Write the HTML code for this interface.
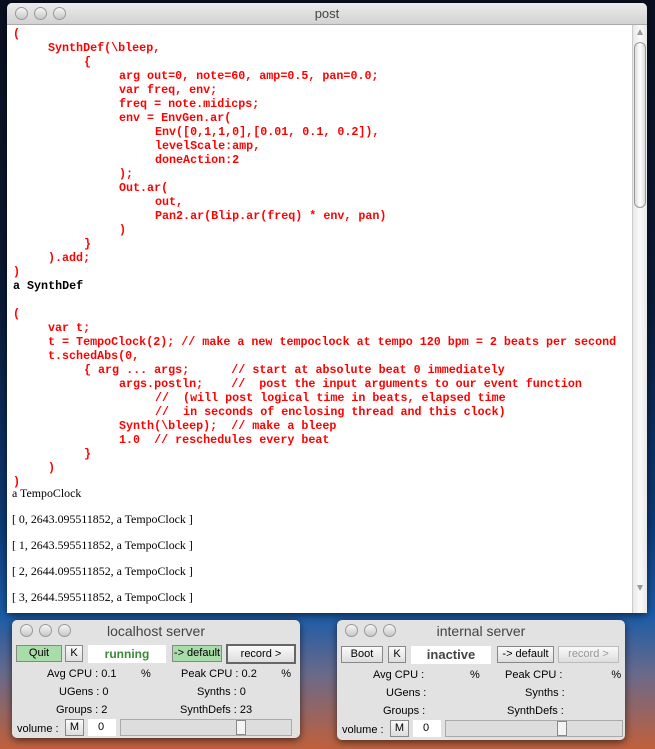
<!DOCTYPE html>
<html><head><meta charset="utf-8"><style>
*{margin:0;padding:0;box-sizing:border-box}
body{width:655px;height:749px;overflow:hidden;position:relative;
background:linear-gradient(#0a1020 0%,#0b1a35 40%,#0d3a78 70%,#1a5ca8 82%,#6a6a8a 90%,#c0603a 100%);
font-family:"Liberation Sans",sans-serif}
.win{position:absolute;background:#e4e4e4;border-radius:5px;box-shadow:0 2px 8px rgba(0,0,0,.6)}
.tb{position:absolute;left:0;right:0;top:0;height:22px;border-radius:5px 5px 0 0;background:linear-gradient(#ececec,#d2d2d2);border-bottom:1px solid #aaa;text-align:center;font-size:13px;line-height:22px;color:#444}
.dot{position:absolute;top:4px;width:13px;height:13px;border-radius:50%;background:linear-gradient(#f6f6f6,#c8c8c8);border:1px solid #999}
.ed{position:absolute;left:0;top:22px;right:15px;bottom:0;background:#fff}
.m{position:absolute;margin-top:2px;font-family:"Liberation Mono",monospace;font-weight:bold;font-size:11.7px;color:#f00;white-space:pre;line-height:14px}
.k{color:#000}
.s{position:absolute;font-family:"Liberation Serif",serif;font-size:11.9px;color:#000;white-space:pre;line-height:14px}
.sb{position:absolute;right:0;top:22px;width:15px;bottom:0;background:linear-gradient(90deg,#e8e8e8,#fafafa,#e8e8e8);border-left:1px solid #ccc}
.th{position:absolute;left:1px;width:12px;top:17px;height:166px;border:1px solid #999;border-radius:6px;background:linear-gradient(90deg,#ddd,#fff,#ddd)}
.b{position:absolute;height:17px;font-size:11px;line-height:15px;text-align:center;border:1px solid #888;background:linear-gradient(#fafafa,#ddd);color:#000}
.g{background:#a8dca8}
.l{position:absolute;font-size:11px;color:#000;white-space:pre}
.box{position:absolute;background:#fff}
</style></head><body>

<div class="win" style="left:7px;top:3px;width:640px;height:610px">
 <div class="tb">post</div>
 <div class="dot" style="left:8px"></div><div class="dot" style="left:27px"></div><div class="dot" style="left:46px"></div>
 <div class="ed"></div>
 <div class="sb"><div style="position:absolute;left:4px;top:4px;width:0;height:0;border-left:3px solid transparent;border-right:3px solid transparent;border-bottom:6px solid #999"></div><div class="th"></div>
 <div style="position:absolute;left:4px;bottom:22px;width:0;height:0;border-left:3px solid transparent;border-right:3px solid transparent;border-top:6px solid #999"></div></div>
</div>

<div class="m" style="left:13px;top:25px">(</div>
<div class="m" style="left:48px;top:39px">SynthDef(\bleep,</div>
<div class="m" style="left:84px;top:53px">{</div>
<div class="m" style="left:119px;top:67px">arg out=0, note=60, amp=0.5, pan=0.0;</div>
<div class="m" style="left:119px;top:81px">var freq, env;</div>
<div class="m" style="left:119px;top:95px">freq = note.midicps;</div>
<div class="m" style="left:119px;top:109px">env = EnvGen.ar(</div>
<div class="m" style="left:155px;top:123px">Env([0,1,1,0],[0.01, 0.1, 0.2]),</div>
<div class="m" style="left:155px;top:137px">levelScale:amp,</div>
<div class="m" style="left:155px;top:151px">doneAction:2</div>
<div class="m" style="left:119px;top:165px">);</div>
<div class="m" style="left:119px;top:179px">Out.ar(</div>
<div class="m" style="left:155px;top:193px">out,</div>
<div class="m" style="left:155px;top:207px">Pan2.ar(Blip.ar(freq) * env, pan)</div>
<div class="m" style="left:119px;top:221px">)</div>
<div class="m" style="left:84px;top:235px">}</div>
<div class="m" style="left:48px;top:249px">).add;</div>
<div class="m" style="left:13px;top:263px">)</div>
<div class="m k" style="left:13px;top:277px">a SynthDef</div>
<div class="m" style="left:13px;top:305px">(</div>
<div class="m" style="left:48px;top:319px">var t;</div>
<div class="m" style="left:48px;top:333px">t = TempoClock(2); // make a new tempoclock at tempo 120 bpm = 2 beats per second</div>
<div class="m" style="left:48px;top:347px">t.schedAbs(0,</div>
<div class="m" style="left:84px;top:361px">{ arg ... args;      // start at absolute beat 0 immediately</div>
<div class="m" style="left:119px;top:375px">args.postln;    //  post the input arguments to our event function</div>
<div class="m" style="left:155px;top:389px">//  (will post logical time in beats, elapsed time</div>
<div class="m" style="left:155px;top:403px">//  in seconds of enclosing thread and this clock)</div>
<div class="m" style="left:119px;top:417px">Synth(\bleep);  // make a bleep</div>
<div class="m" style="left:119px;top:431px">1.0  // reschedules every beat</div>
<div class="m" style="left:84px;top:445px">}</div>
<div class="m" style="left:48px;top:459px">)</div>
<div class="m" style="left:13px;top:473px">)</div>
<div class="s" style="left:12px;top:486px">a TempoClock</div>
<div class="s" style="left:12px;top:512px">[ 0, 2643.095511852, a TempoClock ]</div>
<div class="s" style="left:12px;top:538px">[ 1, 2643.595511852, a TempoClock ]</div>
<div class="s" style="left:12px;top:564px">[ 2, 2644.095511852, a TempoClock ]</div>
<div class="s" style="left:12px;top:590px">[ 3, 2644.595511852, a TempoClock ]</div>

<div class="win" style="left:12px;top:620px;width:288px;height:118px;background:#e2e2e2">
 <div class="tb" style="background:none;border:none;font-size:14px">localhost server</div>
 <div class="dot" style="left:8px"></div><div class="dot" style="left:27px"></div><div class="dot" style="left:46px"></div>
 <div class="b g" style="left:4px;top:25px;width:46px">Quit</div>
 <div class="b" style="left:53px;top:25px;width:18px">K</div>
 <div class="box" style="left:76px;top:25px;width:78px;height:18px;text-align:center;font-weight:bold;font-size:12px;line-height:18px;color:#3a8a3a">running</div>
 <div class="b g" style="left:160px;top:25px;width:50px">-&gt; default</div>
 <div class="b" style="left:214px;top:24px;width:70px;height:20px;border:2px solid #666;line-height:16px">record &gt;</div>
 <div class="l" style="left:35px;top:48px">Avg CPU : 0.1        %</div>
 <div class="l" style="left:169px;top:48px">Peak CPU : 0.2        %</div>
 <div class="l" style="left:47px;top:66px">UGens : 0</div>
 <div class="l" style="left:185px;top:66px">Synths : 0</div>
 <div class="l" style="left:44px;top:84px">Groups : 2</div>
 <div class="l" style="left:168px;top:84px">SynthDefs : 23</div>
 <div class="l" style="left:5px;top:103px">volume :</div>
 <div class="b" style="left:53px;top:99px;width:19px">M</div>
 <div class="box" style="left:76px;top:99px;width:28px;height:17px;font-size:11px;padding-left:10px;line-height:16px">0</div>
 <div style="position:absolute;left:108px;top:99px;width:172px;height:17px;border:1px solid #aaa;background:#ddd"></div>
 <div style="position:absolute;left:224px;top:100px;width:10px;height:15px;border:1px solid #888;background:#f4f4f4"></div>
</div>

<div class="win" style="left:337px;top:620px;width:288px;height:120px;background:#e2e2e2">
 <div class="tb" style="background:none;border:none;font-size:14px">internal server</div>
 <div class="dot" style="left:8px"></div><div class="dot" style="left:27px"></div><div class="dot" style="left:46px"></div>
 <div class="b" style="left:4px;top:26px;width:42px">Boot</div>
 <div class="b" style="left:51px;top:26px;width:18px">K</div>
 <div class="box" style="left:74px;top:26px;width:80px;height:18px;text-align:center;font-weight:bold;font-size:13px;line-height:18px;color:#444">inactive</div>
 <div class="b" style="left:160px;top:26px;width:57px">-&gt; default</div>
 <div class="b" style="left:221px;top:26px;width:61px;color:#999;border-color:#bbb">record &gt;</div>
 <div class="l" style="left:36px;top:49px">Avg CPU :               %</div>
 <div class="l" style="left:168px;top:49px">Peak CPU :                %</div>
 <div class="l" style="left:49px;top:67px">UGens :</div>
 <div class="l" style="left:188px;top:67px">Synths :</div>
 <div class="l" style="left:46px;top:85px">Groups :</div>
 <div class="l" style="left:170px;top:85px">SynthDefs :</div>
 <div class="l" style="left:5px;top:104px">volume :</div>
 <div class="b" style="left:53px;top:100px;width:19px">M</div>
 <div class="box" style="left:76px;top:100px;width:28px;height:17px;font-size:11px;padding-left:10px;line-height:16px">0</div>
 <div style="position:absolute;left:108px;top:100px;width:178px;height:17px;border:1px solid #aaa;background:#ddd"></div>
 <div style="position:absolute;left:220px;top:101px;width:10px;height:15px;border:1px solid #888;background:#f4f4f4"></div>
</div>
</body></html>
